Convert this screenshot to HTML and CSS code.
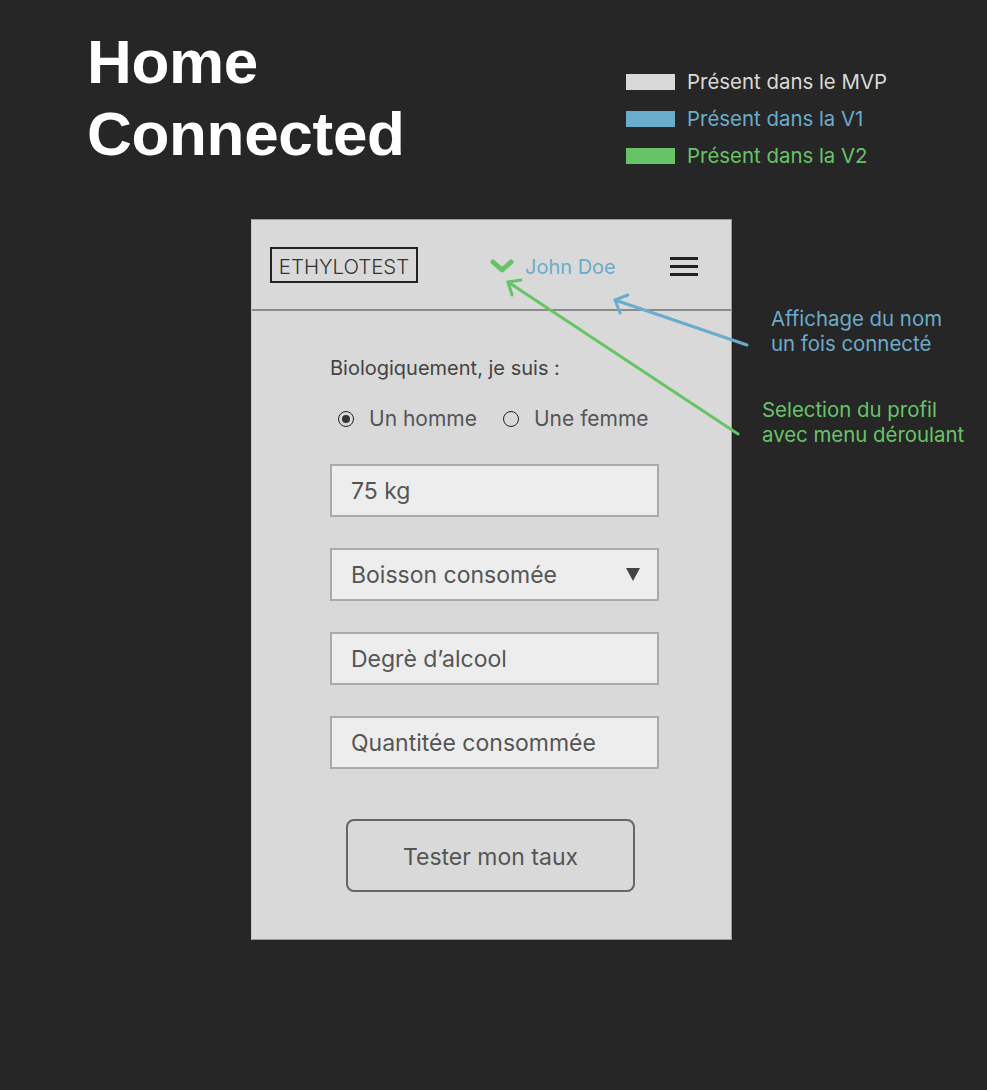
FILE: index.html
```html
<!DOCTYPE html>
<html lang="fr">
<head>
<meta charset="utf-8">
<title>Home Connected</title>
<link rel="stylesheet" href="styles.css">
</head>
<body>
<div class="page">
  <header class="top">
    <h1 class="title">Home<br>Connected</h1>
    <ul class="legend">
      <li class="legend-item mvp"><span class="swatch"></span>Présent dans le MVP</li>
      <li class="legend-item v1"><span class="swatch"></span>Présent dans la V1</li>
      <li class="legend-item v2"><span class="swatch"></span>Présent dans la V2</li>
    </ul>
  </header>

  <main class="stage">
    <section class="phone">
      <div class="phone-header">
        <div class="logo">ETHYLOTEST</div>
        <div class="user">
          <svg class="chevron" width="24" height="14" viewBox="0 0 24 14"><path d="M3 3 L12 11 L21 3" fill="none" stroke="#66c466" stroke-width="5" stroke-linecap="round" stroke-linejoin="round"/></svg>
          <span class="user-name">John Doe</span>
        </div>
        <div class="burger"><span></span><span></span><span></span></div>
      </div>
      <form class="form">
        <p class="question">Biologiquement, je suis :</p>
        <div class="radios">
          <label class="radio"><span class="dot checked"></span>Un homme</label>
          <label class="radio"><span class="dot"></span>Une femme</label>
        </div>
        <div class="field">75 kg</div>
        <div class="field select">Boisson consomée<span class="caret"></span></div>
        <div class="field">Degrè d’alcool</div>
        <div class="field">Quantitée consommée</div>
        <div class="btn">Tester mon taux</div>
      </form>
    </section>

    <aside class="notes">
      <p class="note blue">Affichage du nom<br>un fois connecté</p>
      <p class="note green">Selection du profil<br>avec menu déroulant</p>
    </aside>
  </main>

  <svg class="arrows" width="987" height="1090" viewBox="0 0 987 1090">
    <g fill="none" stroke="#6aaccc" stroke-width="3" stroke-linecap="round" stroke-linejoin="round">
      <path d="M747 345 L615 300"/>
      <path d="M628 295 L615 300 L620 313"/>
    </g>
    <g fill="none" stroke="#66c466" stroke-width="3" stroke-linecap="round" stroke-linejoin="round">
      <path d="M738 434 L508 282"/>
      <path d="M521 280 L508 282 L512 295"/>
    </g>
  </svg>
</div>
</body>
</html>
```

FILE: styles.css
```css
* { box-sizing: border-box; }
html, body { margin: 0; padding: 0; }
body {
  background: #262626;
  font-family: Inter, "Liberation Sans", sans-serif;
  width: 987px;
  height: 1090px;
  overflow: hidden;
}
.page { position: relative; width: 987px; height: 1090px; }

.top {
  display: flex;
  justify-content: space-between;
  padding: 0 0 0 87px;
  height: 219px;
}
.title {
  margin: 26px 0 0;
  font-family: "Liberation Sans", Arial, sans-serif;
  font-weight: 700;
  font-size: 62px;
  line-height: 72px;
  color: #ffffff;
  letter-spacing: -0.3px;
}
.legend {
  list-style: none;
  margin: 70px 100px 0 0;
  padding: 0;
  display: flex;
  flex-direction: column;
  gap: 13px;
}
.legend-item {
  display: flex;
  align-items: center;
  gap: 12px;
  font-size: 20.4px;
  line-height: 24px;
  height: 24px;
}
.swatch { width: 49px; height: 16px; display: block; }
.mvp { color: #d9d9d9; }
.mvp .swatch { background: #d9d9d9; }
.v1 { color: #6aaccc; }
.v1 .swatch { background: #6aaccc; }
.v2 { color: #66c466; }
.v2 .swatch { background: #66c466; }

.stage { display: flex; align-items: flex-start; padding-left: 251px; }

.phone {
  width: 481px;
  height: 721px;
  background: #d9d9d9;
  border: 1px solid #9a9a9a;
  border-left-color: #c8c8c8;
}
.phone-header {
  height: 91px;
  border-bottom: 2px solid #8a8a8a;
  display: flex;
  align-items: center;
  padding: 0 33px 2px 18px;
}
.logo {
  border: 2px solid #222;
  height: 36px;
  width: 148px;
  display: flex;
  align-items: center;
  justify-content: center;
  padding-top: 3px;
  font-size: 20.4px;
  font-weight: 300;
  color: #333;
  margin-top: 2px;
}
.user {
  display: flex;
  align-items: center;
  margin-left: 72px;
  margin-top: 6px;
}
.chevron { display: block; margin-right: 11px; margin-top: -1px; }
.user-name { color: #6aaccc; font-size: 20px; }
.burger {
  margin-left: auto;
  width: 28px;
  display: flex;
  flex-direction: column;
  gap: 5px;
  margin-top: 5px;
}
.burger span { display: block; height: 3px; background: #222; }

.form {
  padding: 45px 0 0 78px;
  display: flex;
  flex-direction: column;
  align-items: flex-start;
}
.question {
  margin: 0;
  font-size: 20px;
  line-height: 24px;
  color: #444;
}
.radios {
  display: flex;
  gap: 26px;
  margin: 27px 0 0 8px;
}
.radio {
  display: flex;
  align-items: center;
  font-size: 21px;
  line-height: 24px;
  color: #555;
}
.dot {
  width: 16px;
  height: 16px;
  border: 1.5px solid #222;
  border-radius: 50%;
  margin-right: 15px;
  display: flex;
  align-items: center;
  justify-content: center;
}
.dot.checked::after {
  content: "";
  width: 8px;
  height: 8px;
  border-radius: 50%;
  background: #333;
}
.field {
  width: 329px;
  height: 53px;
  margin-top: 31px;
  background: #ededed;
  border: 2px solid #aaaaaa;
  display: flex;
  align-items: center;
  padding: 0 17px 0 19px;
  font-size: 23px;
  color: #555;
}
.radios + .field { margin-top: 33px; }
.field.select { justify-content: space-between; }
.caret {
  width: 0;
  height: 0;
  border-left: 7px solid transparent;
  border-right: 7px solid transparent;
  border-top: 13px solid #444;
}
.btn {
  margin: 50px 0 0 16px;
  width: 289px;
  height: 73px;
  border: 2px solid #666;
  border-radius: 8px;
  display: flex;
  align-items: center;
  justify-content: center;
  padding-top: 3px;
  font-size: 23px;
  color: #555;
}

.notes { display: flex; flex-direction: column; }
.note { margin: 0; font-size: 20.4px; line-height: 25px; }
.note.blue { color: #6aaccc; margin: 87px 0 0 39px; }
.note.green { color: #66c466; margin: 41px 0 0 30px; }

.arrows { position: absolute; left: 0; top: 0; pointer-events: none; }
```
